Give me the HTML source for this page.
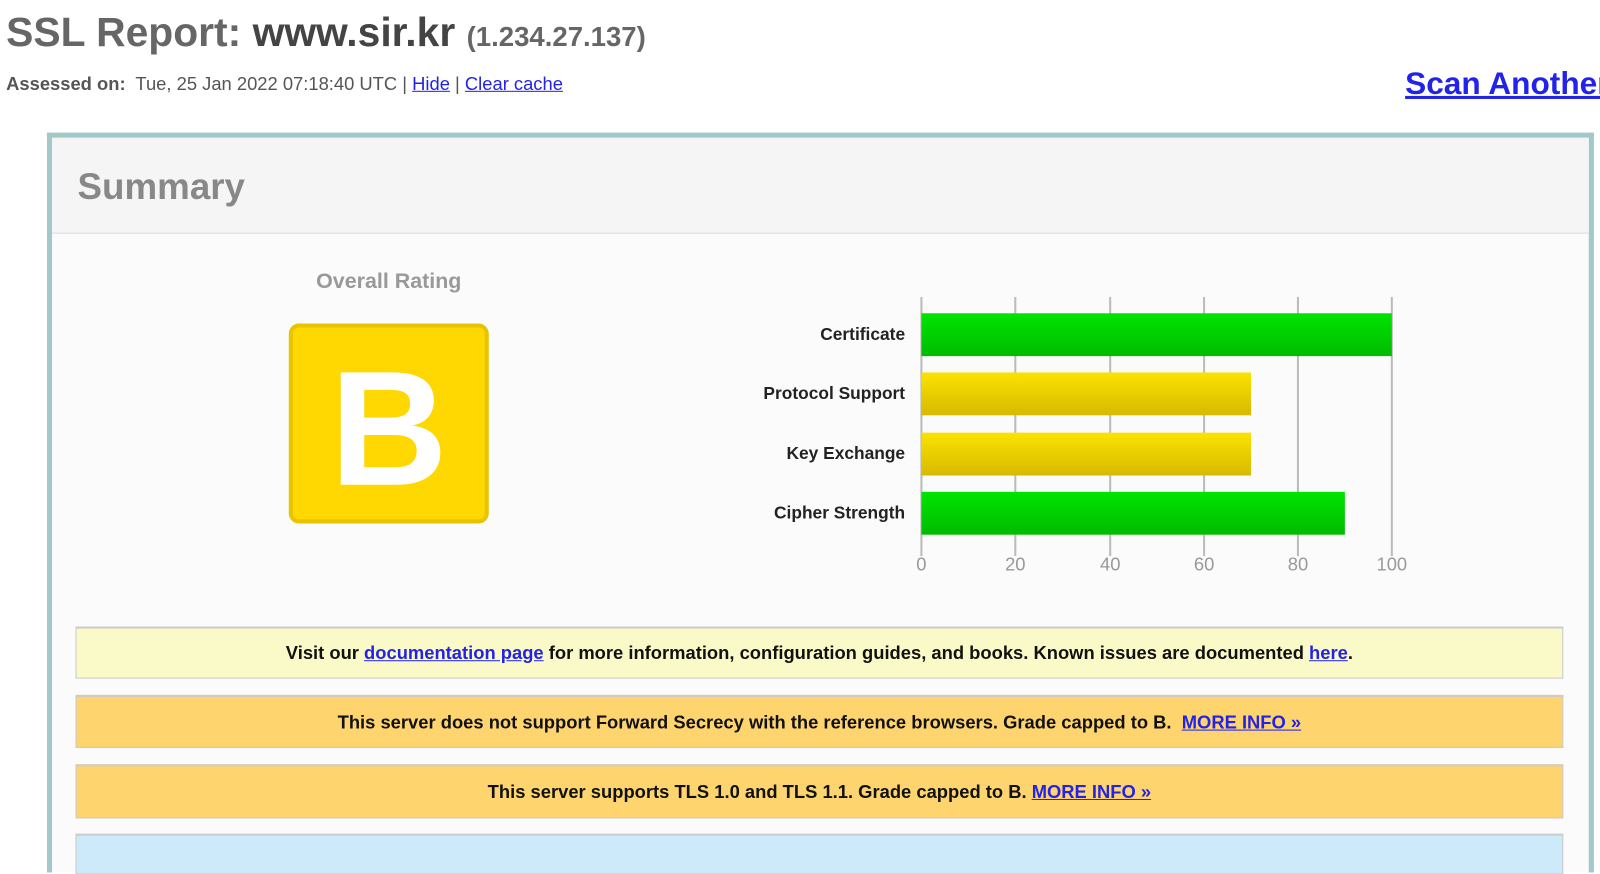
<!DOCTYPE html>
<html><head><meta charset="utf-8"><style>
body{margin:0;width:1600px;height:841px;overflow:hidden;background:#fff;font-family:"Liberation Sans",Arial,sans-serif;position:relative}
#w{position:absolute;left:0;top:0;width:1568px;height:824px;transform:scale(1.0204);transform-origin:0 0}
.a{position:absolute}
a{color:#2323e8;text-decoration:underline}
.bar{position:absolute;left:903px;height:42px}
.g{background:linear-gradient(#00e400,#00bb00)}
.y{background:linear-gradient(#fae300,#d8b900)}
.gl{position:absolute;top:291px;height:254px;width:2px;background:#bbb}
.n{position:absolute;top:543px;font-size:18px;color:#999;width:40px;text-align:center}
.lb{position:absolute;right:681px;font-size:17px;font-weight:bold;color:#222;white-space:nowrap}
.box{position:absolute;left:74px;width:1458px;border:1px solid #c9c9c9;border-top:2px solid #ccc;font-size:18px;font-weight:bold;color:#111;text-align:center;box-sizing:border-box}
</style></head><body><div id="w">
<div class="a" style="left:6px;top:10px;font-size:40px;font-weight:bold;color:#666;white-space:nowrap">SSL Report: <span style="color:#444">www.sir.kr</span> <span style="font-size:27px;color:#666">(1.234.27.137)</span></div>
<div class="a" style="left:6px;top:72px;font-size:18px;color:#555;white-space:nowrap"><b>Assessed on:</b>&nbsp; Tue, 25 Jan 2022 07:18:40 UTC | <a>Hide</a> | <a>Clear cache</a></div>
<div class="a" style="left:1377px;top:64px;font-size:31px;font-weight:bold;white-space:nowrap"><a>Scan Another</a></div>
<div class="a" style="left:46px;top:130px;width:1506px;height:720px;border:5px solid #a3c8c8;border-bottom:none;background:#fbfbfb"></div>
<div class="a" style="left:51px;top:135px;width:1506px;height:93px;background:#f5f5f5;border-bottom:1px solid #d8dede"></div>
<div class="a" style="left:76px;top:162px;font-size:36px;font-weight:bold;color:#888">Summary</div>
<div class="a" style="left:283px;top:264px;width:196px;text-align:center;font-size:21px;font-weight:bold;color:#999">Overall Rating</div>
<div class="a" style="left:283px;top:317px;width:196px;height:196px;box-sizing:border-box;border:4px solid #e8c300;border-radius:10px;background:#fed800"></div>
<div class="a" style="left:283px;top:340px;width:196px;text-align:center;font-size:160px;line-height:160px;font-weight:bold;color:#fff">B</div>
<div class="gl" style="left:902px"></div><div class="gl" style="left:994px"></div><div class="gl" style="left:1087px"></div><div class="gl" style="left:1179px"></div><div class="gl" style="left:1271px"></div><div class="gl" style="left:1363px"></div>
<div class="bar g" style="top:307px;width:461px"></div>
<div class="bar y" style="top:365px;width:323px"></div>
<div class="bar y" style="top:424px;width:323px"></div>
<div class="bar g" style="top:482px;width:415px"></div>
<div class="lb" style="top:318px">Certificate</div>
<div class="lb" style="top:376px">Protocol Support</div>
<div class="lb" style="top:435px">Key Exchange</div>
<div class="lb" style="top:493px">Cipher Strength</div>
<div class="n" style="left:883px">0</div><div class="n" style="left:975px">20</div><div class="n" style="left:1068px">40</div><div class="n" style="left:1160px">60</div><div class="n" style="left:1252px">80</div><div class="n" style="left:1344px">100</div>
<div class="box" style="top:614px;height:51px;line-height:49px;background:#fafac8">Visit our <a>documentation page</a> for more information, configuration guides, and books. Known issues are documented <a>here</a>.</div>
<div class="box" style="top:681px;height:52px;line-height:50px;background:#fed46e">This server does not support Forward Secrecy with the reference browsers. Grade capped to B. &nbsp;<a>MORE INFO »</a></div>
<div class="box" style="top:749px;height:53px;line-height:51px;background:#fed46e">This server supports TLS 1.0 and TLS 1.1. Grade capped to B. <a>MORE INFO »</a></div>
<div class="box" style="top:817px;height:40px;background:#cdeafb"></div>
</div></body></html>
